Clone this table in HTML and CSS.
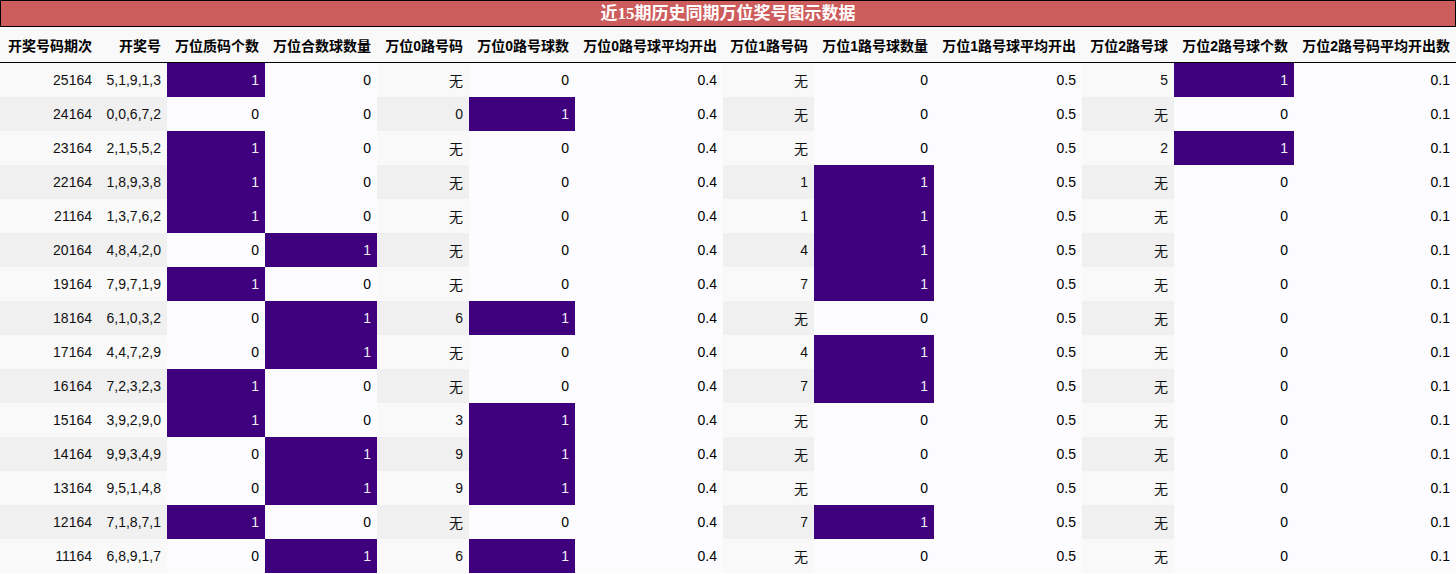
FILE: index.html
```html
<!DOCTYPE html>
<html lang="zh">
<head>
<meta charset="utf-8">
<link rel="stylesheet" href="styles.css">
</head>
<body>
<table class="tbl">
<caption class="title">近15期历史同期万位奖号图示数据</caption>
<colgroup>
<col class="c1"><col class="c2"><col class="c3"><col class="c4"><col class="c5"><col class="c6"><col class="c7"><col class="c8"><col class="c9"><col class="c10"><col class="c11"><col class="c12"><col class="c13">
</colgroup>
<thead>
<tr><th>开奖号码期次</th><th>开奖号</th><th>万位质码个数</th><th>万位合数球数量</th><th>万位0路号码</th><th>万位0路号球数</th><th>万位0路号球平均开出</th><th>万位1路号码</th><th>万位1路号球数量</th><th>万位1路号球平均开出</th><th>万位2路号球</th><th>万位2路号球个数</th><th>万位2路号码平均开出数</th></tr>
</thead>
<tbody id="body"></tbody>
</table>
<script src="app.js"></script>
</body>
</html>
```
FILE: app.js
```js
const rows = [
["25164","5,1,9,1,3",1,0,"无",0,"0.4","无",0,"0.5","5",1,"0.1"],
["24164","0,0,6,7,2",0,0,"0",1,"0.4","无",0,"0.5","无",0,"0.1"],
["23164","2,1,5,5,2",1,0,"无",0,"0.4","无",0,"0.5","2",1,"0.1"],
["22164","1,8,9,3,8",1,0,"无",0,"0.4","1",1,"0.5","无",0,"0.1"],
["21164","1,3,7,6,2",1,0,"无",0,"0.4","1",1,"0.5","无",0,"0.1"],
["20164","4,8,4,2,0",0,1,"无",0,"0.4","4",1,"0.5","无",0,"0.1"],
["19164","7,9,7,1,9",1,0,"无",0,"0.4","7",1,"0.5","无",0,"0.1"],
["18164","6,1,0,3,2",0,1,"6",1,"0.4","无",0,"0.5","无",0,"0.1"],
["17164","4,4,7,2,9",0,1,"无",0,"0.4","4",1,"0.5","无",0,"0.1"],
["16164","7,2,3,2,3",1,0,"无",0,"0.4","7",1,"0.5","无",0,"0.1"],
["15164","3,9,2,9,0",1,0,"3",1,"0.4","无",0,"0.5","无",0,"0.1"],
["14164","9,9,3,4,9",0,1,"9",1,"0.4","无",0,"0.5","无",0,"0.1"],
["13164","9,5,1,4,8",0,1,"9",1,"0.4","无",0,"0.5","无",0,"0.1"],
["12164","7,1,8,7,1",1,0,"无",0,"0.4","7",1,"0.5","无",0,"0.1"],
["11164","6,8,9,1,7",0,1,"6",1,"0.4","无",0,"0.5","无",0,"0.1"]
];
const heat = new Set([2,3,5,6,8,9,11,12]);
const body = document.getElementById("body");
for (const r of rows) {
  const tr = document.createElement("tr");
  r.forEach((v, i) => {
    const td = document.createElement("td");
    td.textContent = v;
    if (heat.has(i)) td.className = (v === 1) ? "hi" : "lo";
    tr.appendChild(td);
  });
  body.appendChild(tr);
}
```
FILE: styles.css
```css
html, body { margin: 0; padding: 0; background: #ffffff; }
.tbl {
  width: 1456px;
  table-layout: fixed;
  border-collapse: collapse;
  font-family: "Liberation Sans", "Noto Sans CJK SC", sans-serif;
  font-size: 14px;
  color: #111;
}
.title {
  background: #cd5c5c;
  color: #ffffff;
  font-family: "Liberation Serif", "Noto Sans CJK SC", serif;
  font-weight: bold;
  font-size: 17px;
  height: 25px;
  line-height: 25px;
  border: 1px solid #000;
  text-align: center;
}
.c1 { width: 98px; } .c2 { width: 69px; } .c3 { width: 98px; } .c4 { width: 112px; }
.c5 { width: 92px; } .c6 { width: 106px; } .c7 { width: 148px; } .c8 { width: 91px; }
.c9 { width: 120px; } .c10 { width: 148px; } .c11 { width: 92px; } .c12 { width: 120px; } .c13 { width: 162px; }
thead th {
  background: #f9f9f9;
  font-weight: bold;
  text-align: right;
  height: 35px;
  padding: 0 6px 0 0;
  border-bottom: 1px solid #000;
  white-space: nowrap;
  color: #000;
}
tbody td {
  height: 34px;
  padding: 0 6px 0 0;
  text-align: right;
  white-space: nowrap;
}
tbody tr:nth-child(odd) td { background: #f9f9f9; }
tbody tr:nth-child(even) td { background: #f0f0f0; }
tbody td.lo { background: #fcfbfd !important; color: #000; }
tbody td.hi { background: #3f007d !important; color: #f1eef6; }
```
